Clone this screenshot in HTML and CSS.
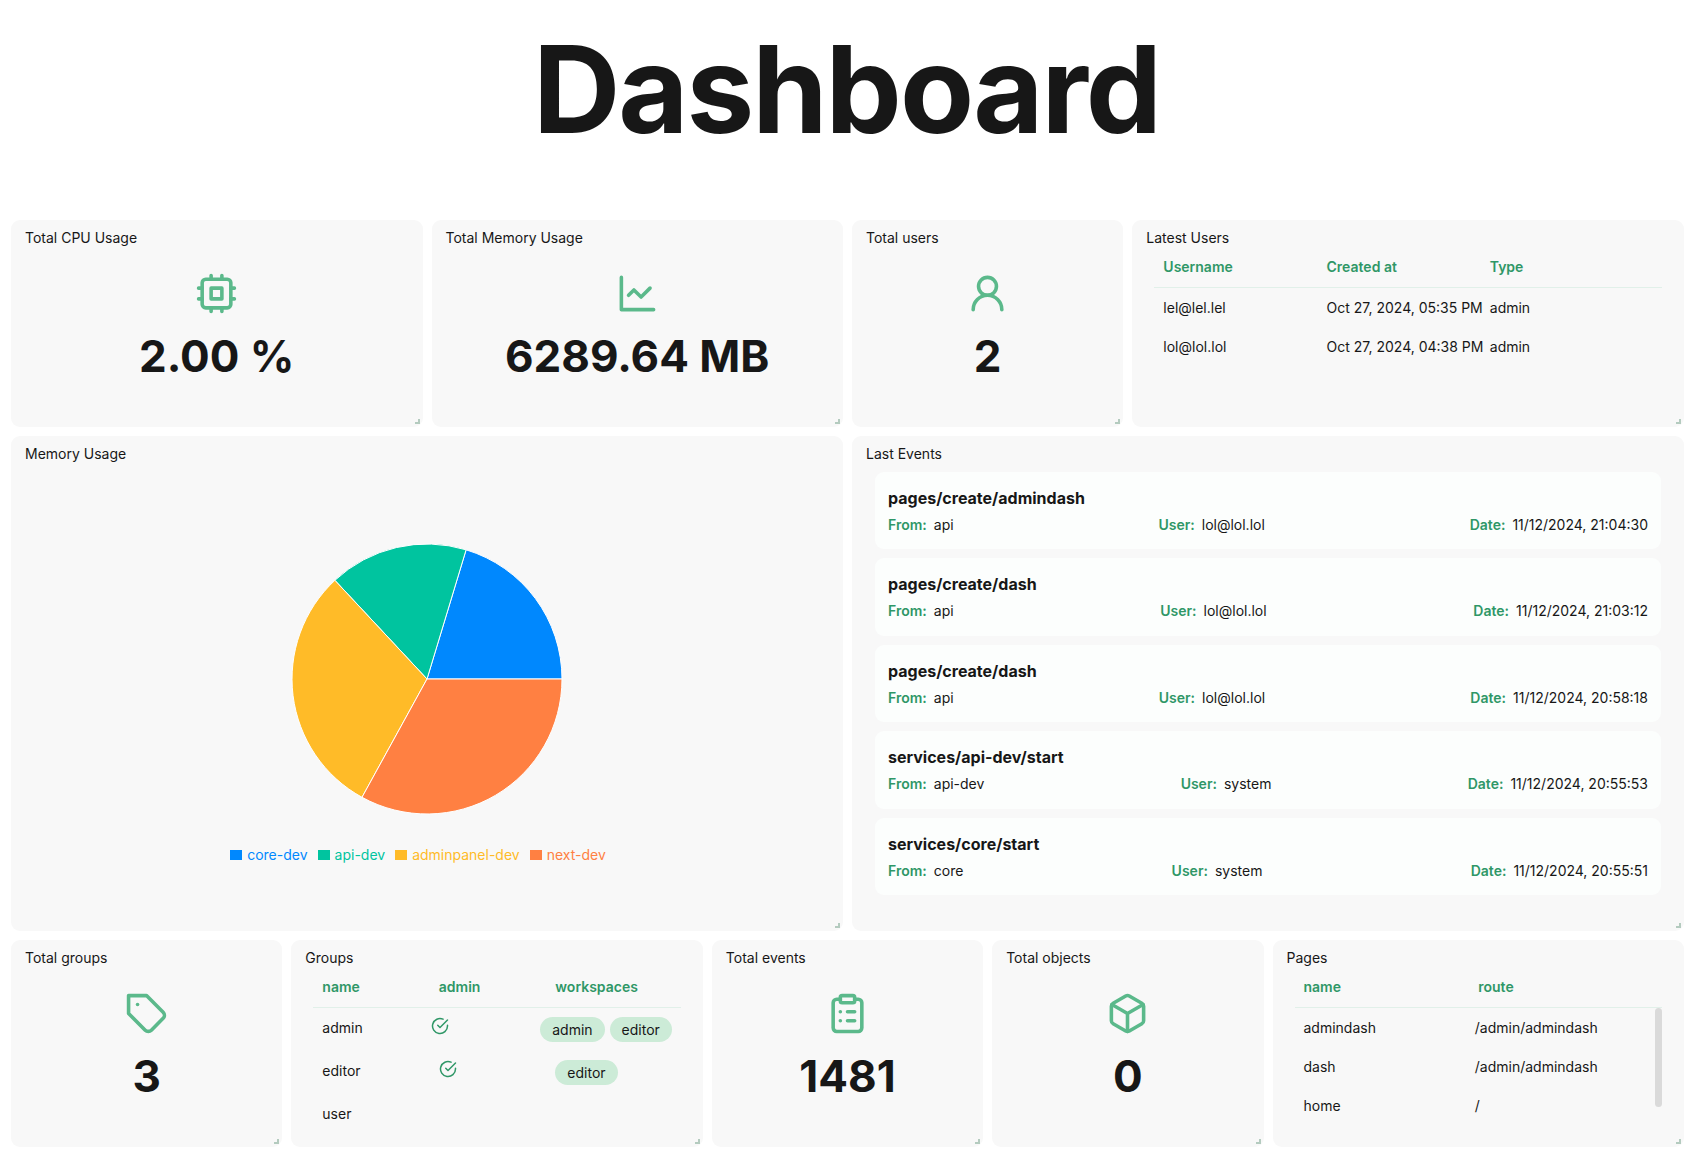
FILE: index.html
```html
<!DOCTYPE html>
<html lang="en">
<head>
<meta charset="utf-8">
<meta name="viewport" content="width=device-width, initial-scale=1">
<title>Dashboard</title>
<link rel="stylesheet" href="styles.css">
</head>
<body>
<h1 class="page-title">Dashboard</h1>
<main class="dashboard">
  <section class="card span-3">
    <h2 class="card-title">Total CPU Usage</h2>
    <div class="stat">
      <svg class="stat-icon" viewBox="0 0 24 24" aria-hidden="true"><rect x="4" y="4" width="16" height="16" rx="2"/><rect x="9" y="9" width="6" height="6"/><path d="M15 2v2M15 20v2M2 15h2M2 9h2M20 15h2M20 9h2M9 2v2M9 20v2"/></svg>
      <p class="stat-value">2.00 %</p>
    </div>
    <span class="resize-handle"></span>
  </section>

  <section class="card span-3">
    <h2 class="card-title">Total Memory Usage</h2>
    <div class="stat">
      <svg class="stat-icon" viewBox="0 0 24 24" aria-hidden="true"><path d="M3 3v18h18"/><path d="m19 9-5 5-4-4-3 3"/></svg>
      <p class="stat-value">6289.64 MB</p>
    </div>
    <span class="resize-handle"></span>
  </section>

  <section class="card span-2">
    <h2 class="card-title">Total users</h2>
    <div class="stat">
      <svg class="stat-icon" viewBox="0 0 24 24" aria-hidden="true"><circle cx="12" cy="8" r="5"/><path d="M20 21a8 8 0 0 0-16 0"/></svg>
      <p class="stat-value">2</p>
    </div>
    <span class="resize-handle"></span>
  </section>

  <section class="card span-4">
    <h2 class="card-title">Latest Users</h2>
    <table class="data-table">
      <thead><tr class="cols-3"><th>Username</th><th>Created at</th><th>Type</th></tr></thead>
      <tbody>
        <tr class="cols-3"><td>lel@lel.lel</td><td>Oct 27, 2024, 05:35 PM</td><td>admin</td></tr>
        <tr class="cols-3"><td>lol@lol.lol</td><td>Oct 27, 2024, 04:38 PM</td><td>admin</td></tr>
      </tbody>
    </table>
    <span class="resize-handle"></span>
  </section>

  <section class="card span-6">
    <h2 class="card-title">Memory Usage</h2>
    <div class="chart">
      <svg class="pie" viewBox="-136 -136 272 272" role="img" aria-label="Memory usage by service">
        <path fill="#0088fe" d="M0 0L135 0A135 135 0 0 0 39.1 -129.2Z"/>
        <path fill="#00c49f" d="M0 0L39.1 -129.2A135 135 0 0 0 -92.1 -98.7Z"/>
        <path fill="#ffbb28" d="M0 0L-92.1 -98.7A135 135 0 0 0 -65 118.3Z"/>
        <path fill="#ff8042" d="M0 0L-65 118.3A135 135 0 0 0 135 0Z"/>
      </svg>
      <ul class="legend">
        <li class="core">core-dev</li>
        <li class="api">api-dev</li>
        <li class="adminpanel">adminpanel-dev</li>
        <li class="next">next-dev</li>
      </ul>
    </div>
    <span class="resize-handle"></span>
  </section>

  <section class="card span-6">
    <h2 class="card-title">Last Events</h2>
    <div class="events">
      <article class="event">
        <h3>pages/create/admindash</h3>
        <div class="event-meta"><span><b>From:</b>api</span><span><b>User:</b>lol@lol.lol</span><span><b>Date:</b>11/12/2024, 21:04:30</span></div>
      </article>
      <article class="event">
        <h3>pages/create/dash</h3>
        <div class="event-meta"><span><b>From:</b>api</span><span><b>User:</b>lol@lol.lol</span><span><b>Date:</b>11/12/2024, 21:03:12</span></div>
      </article>
      <article class="event">
        <h3>pages/create/dash</h3>
        <div class="event-meta"><span><b>From:</b>api</span><span><b>User:</b>lol@lol.lol</span><span><b>Date:</b>11/12/2024, 20:58:18</span></div>
      </article>
      <article class="event">
        <h3>services/api-dev/start</h3>
        <div class="event-meta"><span><b>From:</b>api-dev</span><span><b>User:</b>system</span><span><b>Date:</b>11/12/2024, 20:55:53</span></div>
      </article>
      <article class="event">
        <h3>services/core/start</h3>
        <div class="event-meta"><span><b>From:</b>core</span><span><b>User:</b>system</span><span><b>Date:</b>11/12/2024, 20:55:51</span></div>
      </article>
    </div>
    <span class="resize-handle"></span>
  </section>

  <section class="card span-2">
    <h2 class="card-title">Total groups</h2>
    <div class="stat">
      <svg class="stat-icon" viewBox="0 0 24 24" aria-hidden="true"><path d="M12 2H2v10l9.29 9.29c.94.94 2.48.94 3.42 0l6.58-6.58c.94-.94.94-2.48 0-3.42L12 2Z"/><path d="M7 7h.01"/></svg>
      <p class="stat-value">3</p>
    </div>
    <span class="resize-handle"></span>
  </section>

  <section class="card span-3">
    <h2 class="card-title">Groups</h2>
    <table class="data-table">
      <thead><tr class="cols-3"><th>name</th><th>admin</th><th>workspaces</th></tr></thead>
      <tbody>
        <tr class="cols-3">
          <td>admin</td>
          <td><svg class="check" viewBox="0 0 24 24" role="img" aria-label="yes"><path d="M22 11.08V12a10 10 0 1 1-5.93-9.14"/><path d="m9 11 3 3L22 4"/></svg></td>
          <td><div class="tags"><span class="tag">admin</span><span class="tag">editor</span></div></td>
        </tr>
        <tr class="cols-3">
          <td>editor</td>
          <td><svg class="check" viewBox="0 0 24 24" role="img" aria-label="yes"><path d="M22 11.08V12a10 10 0 1 1-5.93-9.14"/><path d="m9 11 3 3L22 4"/></svg></td>
          <td><div class="tags"><span class="tag">editor</span></div></td>
        </tr>
        <tr class="cols-3"><td>user</td><td></td><td></td></tr>
      </tbody>
    </table>
    <span class="resize-handle"></span>
  </section>

  <section class="card span-2">
    <h2 class="card-title">Total events</h2>
    <div class="stat">
      <svg class="stat-icon" viewBox="0 0 24 24" aria-hidden="true"><rect x="8" y="2" width="8" height="4" rx="1"/><path d="M16 4h2a2 2 0 0 1 2 2v14a2 2 0 0 1-2 2H6a2 2 0 0 1-2-2V6a2 2 0 0 1 2-2h2"/><path d="M12 11h4M12 16h4M8 11h.01M8 16h.01"/></svg>
      <p class="stat-value">1481</p>
    </div>
    <span class="resize-handle"></span>
  </section>

  <section class="card span-2">
    <h2 class="card-title">Total objects</h2>
    <div class="stat">
      <svg class="stat-icon" viewBox="0 0 24 24" aria-hidden="true"><path d="M21 8a2 2 0 0 0-1-1.73l-7-4a2 2 0 0 0-2 0l-7 4A2 2 0 0 0 3 8v8a2 2 0 0 0 1 1.73l7 4a2 2 0 0 0 2 0l7-4A2 2 0 0 0 21 16Z"/><path d="m3.3 7 8.7 5 8.7-5M12 22V12"/></svg>
      <p class="stat-value">0</p>
    </div>
    <span class="resize-handle"></span>
  </section>

  <section class="card span-3">
    <h2 class="card-title">Pages</h2>
    <table class="data-table">
      <thead><tr class="cols-2"><th>name</th><th>route</th></tr></thead>
      <tbody class="scrollable">
        <tr class="cols-2"><td>admindash</td><td>/admin/admindash</td></tr>
        <tr class="cols-2"><td>dash</td><td>/admin/admindash</td></tr>
        <tr class="cols-2"><td>home</td><td>/</td></tr>
      </tbody>
    </table>
    <span class="resize-handle"></span>
  </section>
</main>
</body>
</html>
```
FILE: styles.css
```css
:root {
  --text: #171717;
  --card: #f8f8f8;
  --green-soft: #ccebd7;
  --green-line: #e1f0e9;
  --green-icon: #5bb98b;
  --green-text: #2f9767;
}

* { box-sizing: border-box; }

body {
  margin: 0;
  background: #fff;
  color: var(--text);
  font: 14px/21px Inter, "Liberation Sans", sans-serif;
}

h1, h2, h3, p, ul { margin: 0; padding: 0; }

.page-title {
  padding: 21px 0 63px;
  text-align: center;
  font-size: 121px;
  line-height: 136px;
  font-weight: 700;
  letter-spacing: -2px;
}

.dashboard {
  display: grid;
  grid-template-columns: repeat(12, minmax(0, 1fr));
  grid-template-rows: minmax(207px, auto) minmax(495px, auto) minmax(207px, auto);
  gap: 9px;
  padding: 0 9px 12px 11px;
}

.card {
  position: relative;
  display: flex;
  flex-direction: column;
  padding-top: 9px;
  border-radius: 9px;
  background: var(--card);
}
.span-2 { grid-column: span 2; }
.span-3 { grid-column: span 3; }
.span-4 { grid-column: span 4; }
.span-6 { grid-column: span 6; }

.card-title {
  padding: 0 14px;
  font-size: 14px;
  line-height: 18px;
  font-weight: 400;
}

.resize-handle {
  position: absolute;
  right: 3px;
  bottom: 3px;
  width: 5px;
  height: 5px;
  border: solid #b4cbbf;
  border-width: 0 2px 2px 0;
}

.stat {
  display: flex;
  flex-direction: column;
  align-items: center;
  gap: 15px;
  padding-top: 25px;
}
.stat-icon {
  width: 43px;
  height: 43px;
  fill: none;
  stroke: var(--green-icon);
  stroke-width: 2;
  stroke-linecap: round;
  stroke-linejoin: round;
}
.stat-value {
  font-size: 44px;
  line-height: 52px;
  font-weight: 700;
}

.data-table {
  display: block;
  margin: 0 22px;
}
.data-table thead, .data-table tbody { display: block; }
.data-table tr {
  display: grid;
  padding: 9px;
}
.data-table .cols-2 { grid-template-columns: repeat(2, 1fr); }
.data-table .cols-3 { grid-template-columns: repeat(3, 1fr); }
.data-table th, .data-table td {
  padding: 0;
  text-align: left;
  white-space: nowrap;
}
.data-table thead tr {
  height: 41px;
  border-bottom: 1px solid var(--green-line);
}
.data-table th {
  color: var(--green-text);
  font-weight: 600;
}

.scrollable {
  position: relative;
  padding-right: 7px;
}
.scrollable::after {
  content: "";
  position: absolute;
  top: 0;
  right: 0;
  width: 7px;
  height: 99px;
  border-radius: 4px;
  background: #dadada;
}

.check {
  display: block;
  width: 18px;
  height: 18px;
  fill: none;
  stroke: var(--green-text);
  stroke-width: 2;
  stroke-linecap: round;
  stroke-linejoin: round;
}
.tags {
  display: flex;
  gap: 5px;
}
.tag {
  padding: 0 12px;
  border-radius: 13px;
  background: var(--green-soft);
  line-height: 25px;
}

.chart {
  display: flex;
  flex-direction: column;
  align-items: center;
  gap: 29px;
  padding-top: 80px;
}
.pie {
  width: 272px;
  height: 272px;
  stroke: #fff;
  stroke-width: 1;
  stroke-linejoin: round;
}
.legend {
  display: flex;
  gap: 10px;
  padding-right: 18px;
  list-style: none;
}
.legend li {
  display: flex;
  align-items: center;
  gap: 5px;
}
.legend li::before {
  content: "";
  width: 12px;
  height: 10px;
  background: currentColor;
}
.core { color: #0088fe; }
.api { color: #00c49f; }
.adminpanel { color: #ffbb28; }
.next { color: #ff8042; }

.events {
  flex: 1;
  display: grid;
  grid-auto-rows: 1fr;
  gap: 9px;
  padding: 9px 23px 36px;
}
.event {
  display: flex;
  flex-direction: column;
  gap: 5px;
  padding: 16px 13px 12px;
  border-radius: 9px;
  background: #fcfefd;
}
.event h3 {
  font-size: 16px;
  line-height: 21px;
  font-weight: 700;
}
.event-meta {
  display: flex;
  justify-content: space-between;
}
.event-meta b {
  margin-right: 7px;
  color: var(--green-text);
  font-weight: 600;
}
```
